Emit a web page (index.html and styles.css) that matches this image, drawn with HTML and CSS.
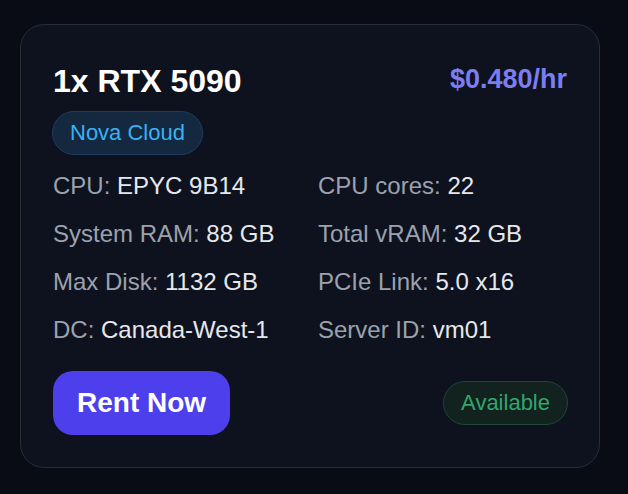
FILE: index.html
```html
<!DOCTYPE html>
<html lang="en">
<head>
<meta charset="utf-8">
<title>GPU Offer</title>
<link rel="stylesheet" href="styles.css">
</head>
<body>
  <div class="card">
    <div class="card-header">
      <h1 class="title">1x RTX 5090</h1>
      <div class="price">$0.480/hr</div>
    </div>
    <div class="provider">Nova Cloud</div>
    <div class="specs">
      <div class="spec"><span class="label">CPU:</span> <span class="value">EPYC 9B14</span></div>
      <div class="spec"><span class="label">CPU cores:</span> <span class="value">22</span></div>
      <div class="spec"><span class="label">System RAM:</span> <span class="value">88 GB</span></div>
      <div class="spec"><span class="label">Total vRAM:</span> <span class="value">32 GB</span></div>
      <div class="spec"><span class="label">Max Disk:</span> <span class="value">1132 GB</span></div>
      <div class="spec"><span class="label">PCIe Link:</span> <span class="value">5.0 x16</span></div>
      <div class="spec"><span class="label">DC:</span> <span class="value">Canada-West-1</span></div>
      <div class="spec"><span class="label">Server ID:</span> <span class="value">vm01</span></div>
    </div>
    <div class="card-footer">
      <button class="rent-btn">Rent Now</button>
      <span class="status">Available</span>
    </div>
  </div>
</body>
</html>
```
FILE: styles.css
```css
* { box-sizing: border-box; }

html, body {
  margin: 0;
  padding: 0;
  background: #090c14;
  font-family: "Liberation Sans", Arial, sans-serif;
}

body {
  padding: 24px 0 0 20px;
}

.card {
  width: 580px;
  height: 444px;
  background: #0e121e;
  border: 1px solid #282c38;
  border-radius: 24px;
  padding: 38px 32px 32px 32px;
  display: flex;
  flex-direction: column;
}

.card-header {
  display: flex;
  justify-content: space-between;
  align-items: flex-start;
}

.title {
  margin: 0;
  font-size: 32px;
  line-height: 36px;
  font-weight: 700;
  color: #ffffff;
}

.price {
  font-size: 27px;
  line-height: 32px;
  font-weight: 700;
  color: #7b7ef2;
}

.provider {
  align-self: flex-start;
  margin-top: 12px;
  margin-left: -1px;
  font-size: 22px;
  line-height: 26px;
  padding: 8px 17px;
  color: #38b2f2;
  background: #142840;
  border: 1px solid #1d3d5b;
  border-radius: 22px;
}

.specs {
  margin-top: 17px;
  display: grid;
  grid-template-columns: 1fr 1fr;
  column-gap: 16px;
  row-gap: 20px;
  font-size: 24px;
  line-height: 28px;
}

.label { color: #9ba2ad; }
.value { color: #e6e8ec; }

.card-footer {
  margin-top: auto;
  display: flex;
  justify-content: space-between;
  align-items: center;
}

.rent-btn {
  font-family: "Liberation Sans", Arial, sans-serif;
  font-size: 28px;
  line-height: 32px;
  font-weight: 700;
  color: #ffffff;
  background: #4d40ec;
  border: none;
  border-radius: 20px;
  padding: 16px 24px;
}

.status {
  font-size: 22px;
  line-height: 26px;
  padding: 8px 17px;
  margin-right: -1px;
  color: #33a56d;
  background: #11221f;
  border: 1px solid #1f4637;
  border-radius: 22px;
}
```
